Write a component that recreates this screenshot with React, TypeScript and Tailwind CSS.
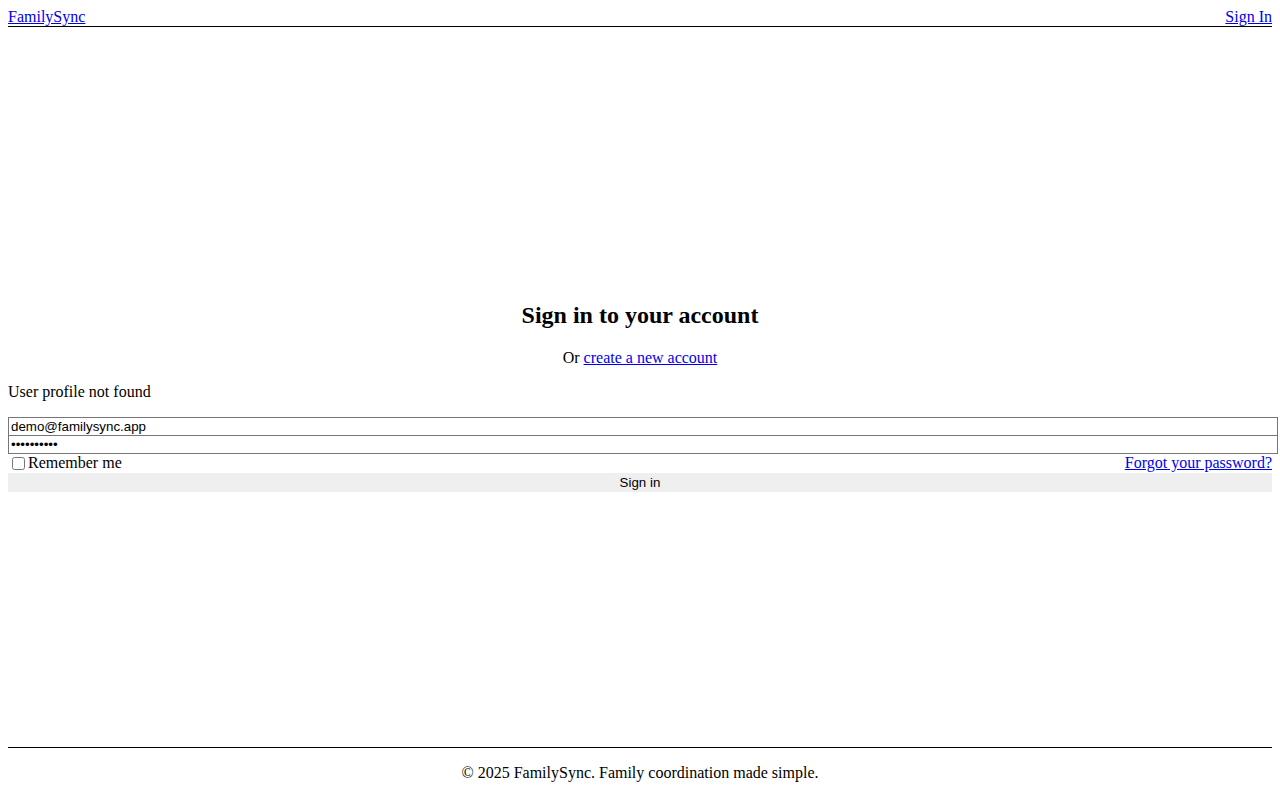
export default function App() {
  return (
    <div className="flex min-h-screen flex-col bg-white p-2 font-['Liberation_Serif',serif] text-[16px] leading-[18px] text-black">
      <header className="flex items-start justify-between border-b border-black">
        <a href="#" className="text-[#0000ee] underline">
          FamilySync
        </a>
        <a href="#" className="text-[#0000ee] underline">
          Sign In
        </a>
      </header>

      <main className="flex flex-1 flex-col justify-center">
        <h2 className="mt-[18px] mb-[20px] text-center text-[24px] leading-[28px] font-bold">
          Sign in to your account
        </h2>
        <p className="text-center">
          Or{' '}
          <a href="#" className="text-[#0000ee] underline">
            create a new account
          </a>
        </p>
        <p className="mt-4 mb-4">User profile not found</p>

        <form className="flex flex-col" onSubmit={(e) => e.preventDefault()}>
          <input
            type="email"
            defaultValue="demo@familysync.app"
            className="h-[19px] w-[1270px] border border-[#767676] px-[2px] font-['Liberation_Sans',sans-serif] text-[13.33px] leading-[15px] outline-none"
          />
          <input
            type="password"
            defaultValue="password12"
            className="-mt-px h-[19px] w-[1270px] border border-[#767676] px-[2px] font-['Liberation_Sans',sans-serif] text-[13.33px] leading-[15px] outline-none"
          />
          <div className="flex items-center justify-between">
            <label className="flex items-center">
              <input type="checkbox" className="mt-[3px] mr-[3px] mb-[3px] ml-[4px] h-[13px] w-[13px]" />
              <span>Remember me</span>
            </label>
            <a href="#" className="text-[#0000ee] underline">
              Forgot your password?
            </a>
          </div>
          <button
            type="submit"
            className="h-[19px] w-full bg-[#efefef] font-['Liberation_Sans',sans-serif] text-[13.33px] leading-[15px] text-black"
          >
            Sign in
          </button>
        </form>
      </main>

      <footer className="border-t border-black">
        <p className="my-4 text-center">© 2025 FamilySync. Family coordination made simple.</p>
      </footer>
    </div>
  )
}
